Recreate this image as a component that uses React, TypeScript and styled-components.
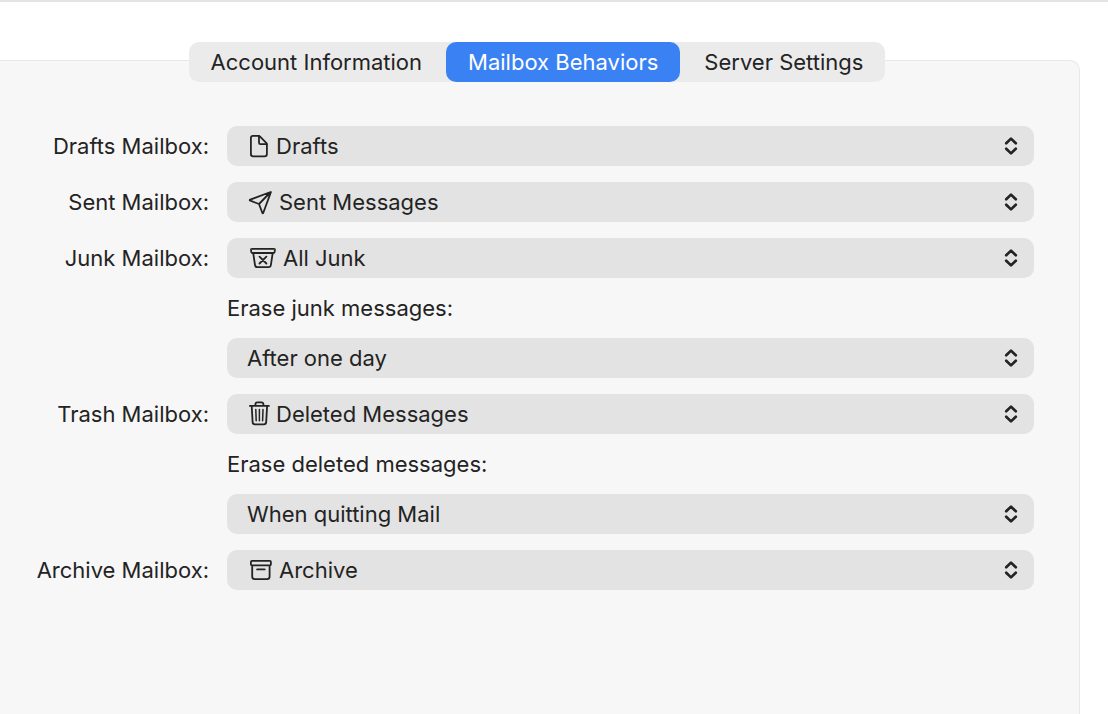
import React, { useState } from "react";
import type { ReactNode } from "react";
import styled, { createGlobalStyle } from "styled-components";

const GlobalStyle = createGlobalStyle`
  *, *::before, *::after { box-sizing: border-box; }
  body {
    margin: 0;
    background: #ffffff;
    color: #232323;
    font-family: Inter, "Liberation Sans", sans-serif;
    font-size: 22px;
    line-height: 28px;
  }
`;

const Page = styled.main`
  display: flex;
  flex-direction: column;
  min-height: 100vh;
  padding: 40px 28px 0 0;
  border-top: 2px solid #e4e4e4;
`;

const Tabs = styled.div`
  display: flex;
  gap: 2px;
  align-self: center;
  position: relative;
  z-index: 1;
  margin: 0 6px -22px 0;
  border-radius: 10px;
  background: #ebebeb;
`;

const Tab = styled.button<{ $active: boolean }>`
  height: 40px;
  padding: 0 22px;
  border: 0;
  border-radius: 10px;
  background: ${(p) => (p.$active ? "#3a82f3" : "transparent")};
  color: ${(p) => (p.$active ? "#ffffff" : "#232323")};
  font: inherit;
  white-space: nowrap;
`;

const Panel = styled.section`
  flex: 1;
  padding: 65px 45px 48px 0;
  border: solid #e8e8e8;
  border-width: 1px 1px 0 0;
  border-top-right-radius: 10px;
  background: #f7f7f7;
`;

const Form = styled.form`
  display: grid;
  grid-template-columns: 209px minmax(0, 1fr);
  gap: 16px 18px;
  align-items: center;
`;

const Label = styled.label`
  text-align: right;
  white-space: nowrap;
`;

const Caption = styled.label`
  grid-column: 2;
`;

const Field = styled.div`
  grid-column: 2;
  display: grid;
  grid-template-columns: minmax(0, 1fr);
  align-items: center;

  > * { grid-area: 1 / 1; }
  > svg { pointer-events: none; z-index: 1; }
`;

const Select = styled.select<{ $indent: number }>`
  appearance: none;
  width: 100%;
  height: 40px;
  padding: 0 44px 0 ${(p) => p.$indent}px;
  border: 0;
  border-radius: 10px;
  background: #e3e3e3;
  color: inherit;
  font: inherit;
`;

const Glyph = styled.svg`
  width: 30px;
  height: 28px;
  margin-left: 21px;
  fill: none;
  stroke: #232323;
  stroke-width: 1.8;
  stroke-linecap: round;
  stroke-linejoin: round;
`;

const Chevrons = styled.svg`
  justify-self: end;
  width: 16px;
  height: 20px;
  margin-right: 15px;
  fill: none;
  stroke: #232323;
  stroke-width: 2.7;
  stroke-linecap: round;
  stroke-linejoin: round;
`;

const DraftIcon = () => (
  <Glyph viewBox="0 0 30 28" aria-hidden="true">
    <path d="M4.9 3.9h5.6q.9 0 1.6.7l6.1 6.2q.7.7.7 1.7v9.6q0 2.3-2.3 2.3H5.2q-2.3 0-2.3-2.3V5.9q0-2 2-2Z" />
    <path d="M11 4v6.7q0 1.5 1.5 1.5h6.3" />
  </Glyph>
);

const SentIcon = () => (
  <Glyph viewBox="0 0 30 28" aria-hidden="true">
    <path d="M22.6 4 2.3 11.6q-1.2.6 0 1.1l8.7 3.3 3.3 8.8q.5 1 1 0L22.8 4.4q.2-.6-.2-.4ZM11 16 22.2 4.5" />
  </Glyph>
);

const JunkIcon = () => (
  <Glyph viewBox="0 0 30 28" aria-hidden="true">
    <path d="M4 4.8h21.9q1.1 0 1 1.1l-.3 2.1q-.2 1-1.2 1H4.5q-1 0-1.2-1L3 5.9q-.1-1.1 1-1.1ZM5.2 9 7 21q.3 2.2 2.3 2.2h11.3q2 0 2.3-2.2L24.7 9M11.5 12.6l6.9 6.9M18.4 12.6l-6.9 6.9" />
  </Glyph>
);

const TrashIcon = () => (
  <Glyph viewBox="0 0 30 28" aria-hidden="true">
    <path d="M1.9 5.9h19M7.4 5.7V4.3q0-2 2-2h4q2 0 2 2v1.4M3.7 6l.9 15.9q.1 2.4 2.4 2.4h8.8q2.3 0 2.4-2.4L19.1 6" />
    <path strokeWidth="1.5" d="m7.8 9.5.4 11.2M11.4 9.5v11.2M15 9.5l-.4 11.2" />
  </Glyph>
);

const ArchiveIcon = () => (
  <Glyph viewBox="0 0 30 28" aria-hidden="true">
    <path d="M4 4.9h17.8q1.1 0 1.1 1.1v2.2q0 1.1-1.1 1.1H4q-1.1 0-1.1-1.1V6q0-1.1 1.1-1.1ZM4.2 9.3v11.3q0 2.6 2.6 2.6H19q2.6 0 2.6-2.6V9.3M9.1 13.4h7.6" />
  </Glyph>
);

interface PopupProps {
  id: string;
  options: string[];
  icon?: ReactNode;
  indent?: number;
}

function Popup({ id, options, icon, indent = 20 }: PopupProps) {
  return (
    <Field>
      <Select id={id} name={id} $indent={indent}>
        {options.map((option) => (
          <option key={option}>{option}</option>
        ))}
      </Select>
      {icon}
      <Chevrons viewBox="0 0 16 20" aria-hidden="true">
        <path d="M3.2 7.2 8 2.6l4.8 4.6M3.2 12.8 8 17.4l4.8-4.6" />
      </Chevrons>
    </Field>
  );
}

const tabs = ["Account Information", "Mailbox Behaviors", "Server Settings"];

export default function App() {
  const [active, setActive] = useState(tabs[1]);

  return (
    <>
      <GlobalStyle />
      <Page>
        <Tabs role="tablist" aria-label="Account settings">
          {tabs.map((tab) => (
            <Tab
              key={tab}
              type="button"
              role="tab"
              aria-selected={tab === active}
              $active={tab === active}
              onClick={() => setActive(tab)}
            >
              {tab}
            </Tab>
          ))}
        </Tabs>
        <Panel role="tabpanel" aria-label={active}>
          <Form>
            <Label htmlFor="drafts">Drafts Mailbox:</Label>
            <Popup id="drafts" options={["Drafts"]} icon={<DraftIcon />} indent={49} />
            <Label htmlFor="sent">Sent Mailbox:</Label>
            <Popup id="sent" options={["Sent Messages"]} icon={<SentIcon />} indent={52} />
            <Label htmlFor="junk">Junk Mailbox:</Label>
            <Popup id="junk" options={["All Junk"]} icon={<JunkIcon />} indent={56} />
            <Caption htmlFor="erase-junk">Erase junk messages:</Caption>
            <Popup id="erase-junk" options={["After one day"]} />
            <Label htmlFor="trash">Trash Mailbox:</Label>
            <Popup id="trash" options={["Deleted Messages"]} icon={<TrashIcon />} indent={49} />
            <Caption htmlFor="erase-deleted">Erase deleted messages:</Caption>
            <Popup id="erase-deleted" options={["When quitting Mail"]} />
            <Label htmlFor="archive">Archive Mailbox:</Label>
            <Popup id="archive" options={["Archive"]} icon={<ArchiveIcon />} indent={52} />
          </Form>
        </Panel>
      </Page>
    </>
  );
}
